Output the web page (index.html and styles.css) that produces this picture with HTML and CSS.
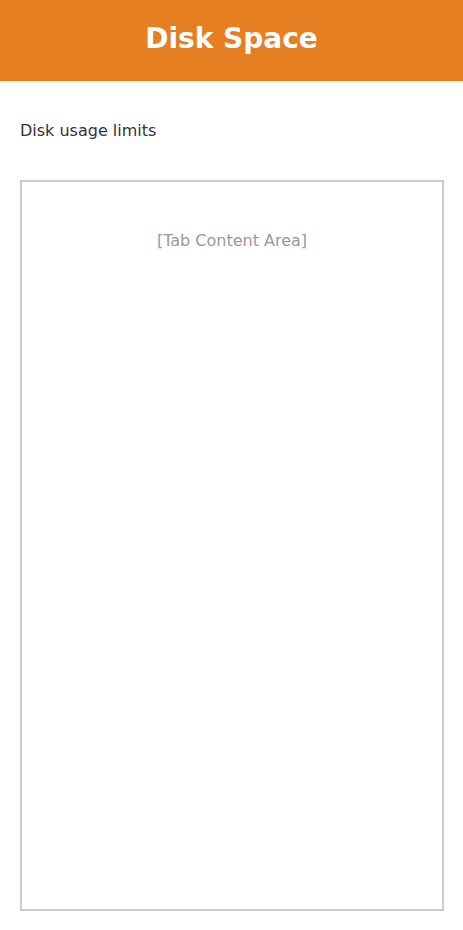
FILE: index.html
```html
<!DOCTYPE html>
<html>
<head>
<meta charset="utf-8">
<link rel="stylesheet" href="styles.css">
</head>
<body>
<header class="header"><h1 class="title">Disk Space</h1></header>
<main class="main">
  <p class="subtitle">Disk usage limits</p>
  <section class="tab-box">
    <div class="placeholder">[Tab Content Area]</div>
  </section>
</main>
</body>
</html>
```
FILE: styles.css
```css
html, body {
  margin: 0;
  padding: 0;
  height: 100%;
}
body {
  font-family: "DejaVu Sans", sans-serif;
  background: #fff;
  display: flex;
  flex-direction: column;
}
.header {
  background: #e67e22;
  height: 81px;
  display: flex;
  align-items: center;
  justify-content: center;
  flex-shrink: 0;
}
.title {
  margin: 0;
  color: #fff;
  font-size: 28px;
  font-weight: bold;
  line-height: 1;
  position: relative;
  top: -2px;
}
.main {
  flex: 1;
  display: flex;
  flex-direction: column;
  padding: 40px 19px 19px 20px;
  min-height: 0;
}
.subtitle {
  margin: 0 0 39px 0;
  font-size: 16px;
  line-height: 20px;
  color: #333;
}
.tab-box {
  flex: 1;
  border: 2px solid #ccc;
  padding-top: 49px;
  text-align: center;
}
.placeholder {
  font-size: 16px;
  line-height: 20px;
  color: #999;
}
```
